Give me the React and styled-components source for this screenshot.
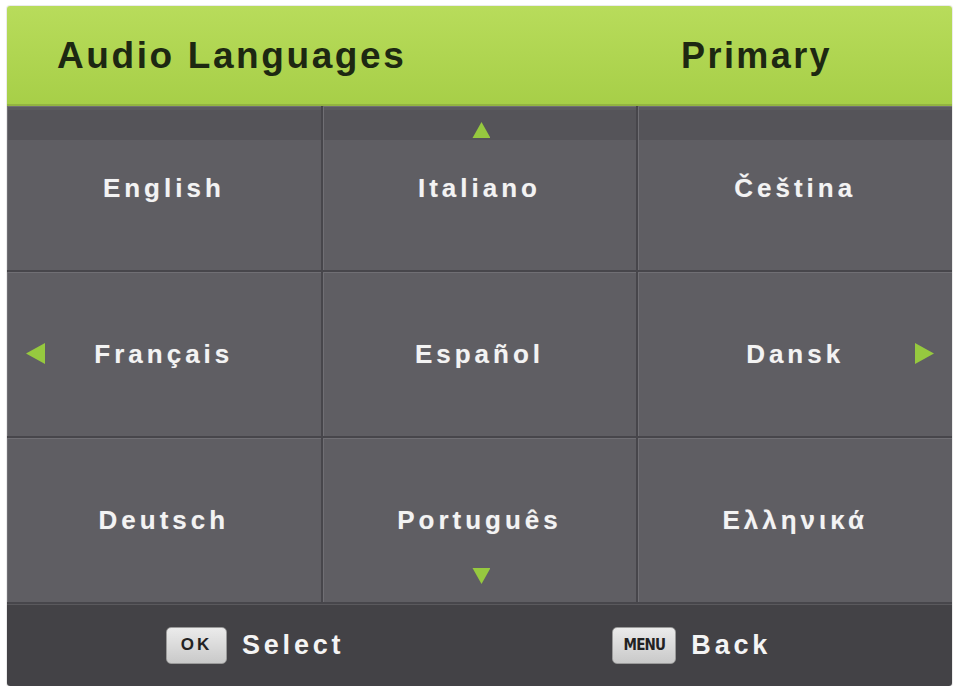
import React from "react";
import styled, { createGlobalStyle } from "styled-components";

const GlobalStyle = createGlobalStyle`
  html, body {
    margin: 0;
    background: #ffffff;
  }
  body {
    font-family: "Liberation Sans", Arial, sans-serif;
  }
`;

const languages = [
  "English", "Italiano", "Čeština",
  "Français", "Español", "Dansk",
  "Deutsch", "Português", "Ελληνικά",
];

function App() {
  return (
    <>
      <GlobalStyle />
      <Page>
        <Panel>
          <Header>
            <Title>Audio Languages</Title>
            <Mode>Primary</Mode>
          </Header>
          <Grid>
            {languages.map((name, i) => (
              <Cell key={name} $first={i < 3}>
                {i === 1 && <Arrow $dir="up" />}
                {i === 7 && <Arrow $dir="down" />}
                {i === 3 && <Arrow $dir="left" />}
                {i === 5 && <Arrow $dir="right" />}
                <Label>{name}</Label>
              </Cell>
            ))}
          </Grid>
          <Footer>
            <Hint>
              <Key>OK</Key>
              <HintText>Select</HintText>
            </Hint>
            <Hint>
              <Key $small>MENU</Key>
              <HintText>Back</HintText>
            </Hint>
          </Footer>
        </Panel>
      </Page>
    </>
  );
}

export default App;

const Page = styled.div`
  padding: 6px 0 0 7px;
`;

const Panel = styled.div`
  width: 945px;
  height: 680px;
  display: flex;
  flex-direction: column;
  border-radius: 3px;
  overflow: hidden;
  box-shadow: 0 0 0 1px rgba(0, 0, 0, 0.08);
`;

const Header = styled.div`
  height: 100px;
  flex-shrink: 0;
  display: flex;
  align-items: center;
  justify-content: space-between;
  padding: 0 120px 0 50px;
  box-sizing: border-box;
  background: linear-gradient(#b8dc5b, #a7cf48);
  border-bottom: 2px solid #93b441;
`;

const Title = styled.div`
  font-size: 37px;
  font-weight: bold;
  letter-spacing: 2.6px;
  color: #1d2812;
  padding-top: 2px;
`;

const Mode = styled(Title)`
  font-size: 36px;
  letter-spacing: 2.4px;
`;

const Grid = styled.div`
  display: grid;
  grid-template-columns: repeat(3, 1fr);
  grid-template-rows: repeat(3, 164px);
  gap: 2px;
  background: #47464b;
  padding-bottom: 2px;
`;

const Cell = styled.div`
  position: relative;
  display: flex;
  align-items: center;
  justify-content: center;
  background: ${(p) =>
    p.$first
      ? "linear-gradient(#5b5a5f 0, #5b5a5f 4px, #555459 4px, #555459 34px, #5f5e63 34px)"
      : "#5f5e63"};
  box-shadow: inset 1px 1px 0 #706f74;
`;

const Label = styled.span`
  font-size: 26px;
  font-weight: bold;
  letter-spacing: 4px;
  color: #f3f3f3;
  text-shadow: 0 0 1px rgba(255, 255, 255, 0.3);
`;

const arrowShapes = {
  up: "polygon(50% 0, 100% 100%, 0 100%)",
  down: "polygon(0 0, 100% 0, 50% 100%)",
  left: "polygon(0 50%, 100% 0, 100% 100%)",
  right: "polygon(0 0, 100% 50%, 0 100%)",
};

const Arrow = styled.div`
  position: absolute;
  background: #96c93f;
  clip-path: ${(p) => arrowShapes[p.$dir]};
  width: ${(p) => (p.$dir === "up" || p.$dir === "down" ? "18px" : "19px")};
  height: ${(p) => (p.$dir === "up" || p.$dir === "down" ? "16px" : "21px")};
  ${(p) => p.$dir === "up" && "top: 16px; left: calc(50% - 7px);"}
  ${(p) => p.$dir === "down" && "bottom: 18px; left: calc(50% - 7px);"}
  ${(p) => p.$dir === "left" && "left: 19px; top: calc(50% - 11px);"}
  ${(p) => p.$dir === "right" && "right: 18px; top: calc(50% - 11px);"}
`;

const Footer = styled.div`
  flex: 1;
  display: flex;
  align-items: center;
  gap: 268px;
  padding-left: 159px;
  background: #434246;
  box-shadow: inset 0 1px 0 #5a595d;
`;

const Hint = styled.div`
  display: flex;
  align-items: center;
  gap: 15px;
`;

const Key = styled.div`
  width: ${(p) => (p.$small ? "64px" : "61px")};
  height: 37px;
  box-sizing: border-box;
  display: flex;
  align-items: center;
  justify-content: center;
  border-radius: 5px;
  border: 1px solid #9a9a9a;
  background: linear-gradient(#ebebeb, #c9c9c9);
  color: #222;
  font-weight: bold;
  font-size: ${(p) => (p.$small ? "15px" : "17px")};
  letter-spacing: ${(p) => (p.$small ? "-0.8px" : "3px")};
  ${(p) => p.$small && "font-family: 'DejaVu Sans Condensed', 'Liberation Sans Narrow', sans-serif;"}
`;

const HintText = styled.span`
  font-size: 27px;
  font-weight: bold;
  letter-spacing: 3.8px;
  color: #f4f4f4;
`;
